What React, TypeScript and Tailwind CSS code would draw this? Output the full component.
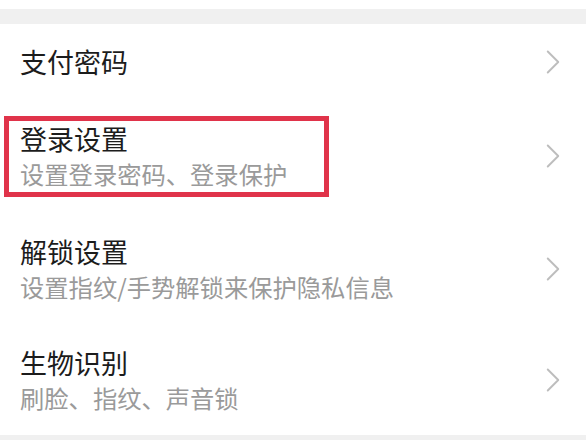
import { ChevronRight } from 'lucide-react'

interface Item {
  title: string
  desc?: string
  boxed?: boolean
  h: string
}

const items: Item[] = [
  { title: '支付密码', h: 'h-[75px]' },
  { title: '登录设置', desc: '设置登录密码、登录保护', boxed: true, h: 'h-[113px]' },
  { title: '解锁设置', desc: '设置指纹/手势解锁来保护隐私信息', h: 'h-[113px]' },
  { title: '生物识别', desc: '刷脸、指纹、声音锁', h: 'h-[110px]' },
]

const font = { fontFamily: '"Noto Sans CJK SC", "Noto Sans", sans-serif' }

function Row({ item }: { item: Item }) {
  return (
    <div className={`relative shrink-0 flex items-center pl-5 pr-[12px] ${item.h}`}>
      {item.boxed && (
        <div className="absolute left-[4px] top-[17px] w-[325px] h-[81px] border-[5px] border-[#e0334a]" />
      )}
      <div className="flex flex-col">
        <span className="text-[27px] leading-[36px] text-[#1c1c1c]">{item.title}</span>
        {item.desc && (
          <span className="text-[24.3px] leading-[34px] text-[#9a9a9a]">{item.desc}</span>
        )}
      </div>
      <ChevronRight size={42} strokeWidth={1.1} className="ml-auto text-[#bdbdbd]" />
    </div>
  )
}

export default function App() {
  return (
    <div className="w-[586px] h-[440px] bg-white overflow-hidden flex flex-col" style={font}>
      <div className="h-[9px] shrink-0 bg-white" />
      <div className="h-[15px] shrink-0 bg-[#f0f0f0]" />
      {items.map((it) => (
        <Row key={it.title} item={it} />
      ))}
      <div className="flex-1 bg-[#f0f0f0]" />
    </div>
  )
}
